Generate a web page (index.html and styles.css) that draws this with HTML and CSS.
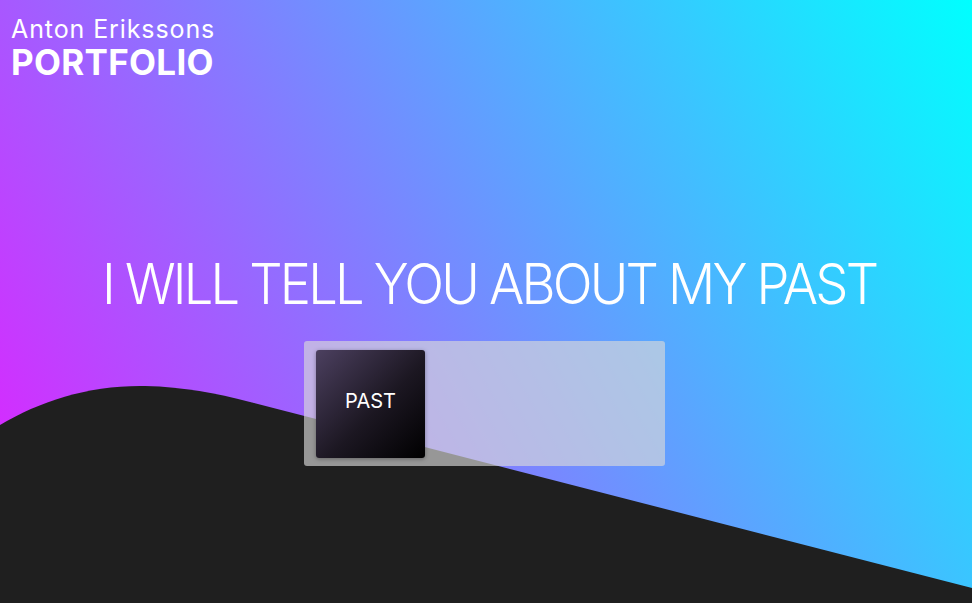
FILE: index.html
```html
<!DOCTYPE html>
<html lang="en">
<head>
<meta charset="utf-8">
<title>Anton Erikssons Portfolio</title>
<link rel="stylesheet" href="styles.css">
</head>
<body>
<div class="page">
  <svg class="wave" viewBox="0 0 972 603" preserveAspectRatio="none" aria-hidden="true">
    <path d="M0,425 C40,401 90,385 145,386 C185,387 215,393 250,402 L972,588 L972,603 L0,603 Z" fill="#1f1f1f"/>
  </svg>
  <header class="brand">
    <div class="brand-name">Anton Erikssons</div>
    <div class="brand-title">PORTFOLIO</div>
  </header>
  <main class="hero">
    <h1 class="hero-title">I WILL TELL YOU ABOUT MY PAST</h1>
    <div class="panel">
      <div class="tile">PAST</div>
    </div>
  </main>
</div>
</body>
</html>
```
FILE: styles.css
```css
html, body {
  margin: 0;
  padding: 0;
  height: 100%;
}
body {
  font-family: "Inter", "Noto Sans", sans-serif;
  color: #fff;
  overflow: hidden;
}
.page {
  position: relative;
  width: 100%;
  height: 603px;
  background: linear-gradient(60deg, #e41cff 0%, #00ffff 100%);
  display: flex;
  flex-direction: column;
}
.wave {
  position: absolute;
  left: 0;
  top: 0;
  width: 100%;
  height: 100%;
  z-index: 0;
}
.brand {
  position: relative;
  z-index: 1;
  padding: 15px 0 0 11px;
}
.brand-name {
  font-size: 25px;
  font-weight: 400;
  line-height: 28px;
  letter-spacing: 0.9px;
}
.brand-title {
  font-size: 35px;
  font-weight: 700;
  line-height: 38px;
  letter-spacing: 0.3px;
}
.hero {
  position: relative;
  z-index: 1;
  display: flex;
  flex-direction: column;
  align-items: center;
  padding-top: 169px;
}
.hero-title {
  margin: 0 0 0 6px;
  font-size: 56px;
  font-weight: 300;
  line-height: 68px;
  letter-spacing: -3px;
  white-space: nowrap;
  transform: scaleX(0.937);
}
.panel {
  margin: 23px 3px 0 0;
  width: 361px;
  height: 125px;
  box-sizing: border-box;
  padding: 9px 12px;
  background: rgba(217, 217, 217, 0.65);
  border-radius: 3px;
  display: flex;
}
.tile {
  width: 109px;
  height: 108px;
  box-sizing: border-box;
  padding-bottom: 7px;
  border-radius: 3px;
  background: linear-gradient(135deg, #4c4060 0%, #1c1722 55%, #000 100%);
  box-shadow: 0 1px 4px rgba(0, 0, 0, 0.35);
  display: flex;
  align-items: center;
  justify-content: center;
  font-size: 20px;
  font-weight: 400;
}
```
